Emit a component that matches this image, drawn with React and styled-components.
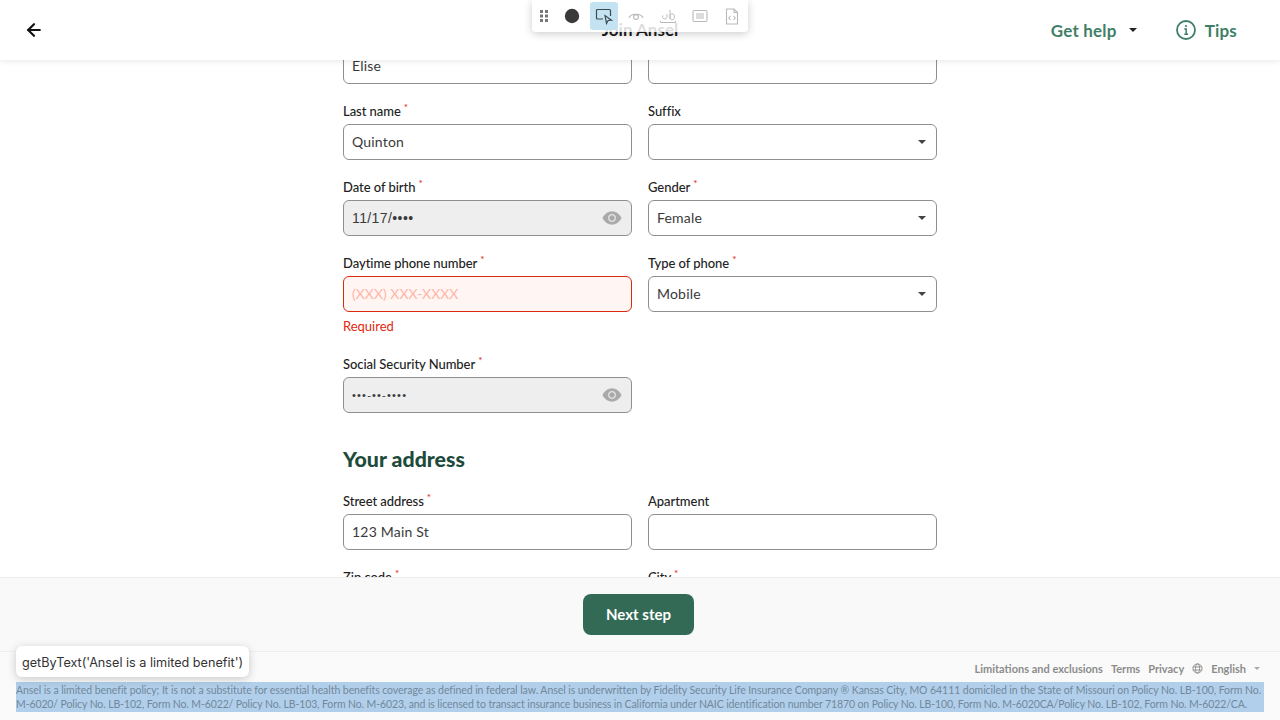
import styled, { createGlobalStyle } from "styled-components";
import { ArrowLeft } from "lucide-react";

const GlobalStyle = createGlobalStyle`
  html, body {
    margin: 0;
    height: 100%;
    overflow: hidden;
    background: #fff;
    font-family: "Lato", "Liberation Sans", sans-serif;
  }
  #root { height: 100%; }
`;

const Page = styled.div`
  position: relative;
  display: flex;
  flex-direction: column;
  width: 1280px;
  height: 720px;
  overflow: hidden;
`;

const Header = styled.header`
  position: relative;
  z-index: 2;
  display: flex;
  align-items: center;
  justify-content: space-between;
  flex: 0 0 60px;
  padding: 0 43px 0 24px;
  background: #fff;
  box-shadow: 0 1px 6px rgba(0, 0, 0, 0.1);
`;

const BackButton = styled.div`
  display: flex;
  color: #111;
`;

const Title = styled.div`
  position: absolute;
  left: 0;
  right: 0;
  top: 20px;
  text-align: center;
  font-size: 17px;
  line-height: 20px;
  font-weight: 700;
  color: #1c1c1c;
`;

const HeaderActions = styled.div`
  display: flex;
  align-items: center;
  gap: 39px;
`;

const HeaderLink = styled.div`
  display: flex;
  align-items: center;
  gap: ${(p) => p.$gap || 0}px;
  font-size: 17px;
  font-weight: 700;
  letter-spacing: 0.2px;
  color: #3f7f68;
`;

const Caret = styled.span`
  display: inline-block;
  width: 0;
  height: 0;
  margin-left: ${(p) => p.$left || 0}px;
  margin-right: ${(p) => p.$right || 0}px;
  border-left: ${(p) => p.$size || 4}px solid transparent;
  border-right: ${(p) => p.$size || 4}px solid transparent;
  border-top: ${(p) => p.$size || 4}px solid ${(p) => p.$color || "#333"};
`;

const Scroll = styled.main`
  flex: 1;
  min-height: 0;
  overflow: hidden;
`;

const Form = styled.div`
  width: 595px;
  margin: -34px 0 0 343px;
`;

const Grid = styled.div`
  display: grid;
  grid-template-columns: 289px 289px;
  column-gap: 16px;
  row-gap: 18px;
  align-items: start;
`;

const Field = styled.div`
  display: flex;
  flex-direction: column;
`;

const Label = styled.label`
  height: 20px;
  margin-bottom: 2px;
  font-size: 13px;
  line-height: 19px;
  font-weight: 500;
  color: #222;
  letter-spacing: -0.05px;

  sup {
    margin-left: 3px;
    font-size: 10px;
    line-height: 0;
    color: #e02810;
  }
`;

const InputBox = styled.div`
  box-sizing: border-box;
  display: flex;
  align-items: center;
  justify-content: space-between;
  height: 36px;
  padding: 0 9px 1px 8px;
  border: 1px solid ${(p) => (p.$error ? "#d92a0f" : "#8f8f8f")};
  border-radius: 6px;
  background: ${(p) => (p.$error ? "#fff5f3" : p.$disabled ? "#eeeeee" : "#fff")};
  font-size: 14px;
  color: ${(p) => (p.$error ? "#ffb5a8" : "#3a3a3a")};
  letter-spacing: ${(p) => (p.$error ? 0 : 0.2)}px;
`;

const Masked = styled.span`
  letter-spacing: ${(p) => p.$spacing || 0}px;
  font-family: "Liberation Sans", sans-serif;
  font-size: ${(p) => p.$size || 14}px;
`;

const ErrorText = styled.div`
  height: 20px;
  margin: 4px 0 1px;
  font-size: 13px;
  line-height: 20px;
  color: #e02810;
`;

const Heading = styled.h2`
  height: 28px;
  margin: 32px 0 19px;
  font-size: 21.3px;
  line-height: 28px;
  font-weight: 900;
  color: #1d4b3c;
`;

const ActionBar = styled.div`
  display: flex;
  align-items: flex-start;
  justify-content: center;
  box-sizing: border-box;
  flex: 0 0 74px;
  padding: 16px 3px 0 0;
  border-top: 1px solid #ececec;
  background: #f9f9f9;
`;

const NextButton = styled.button`
  width: 111px;
  height: 41px;
  padding: 0 0 2px;
  border: 0;
  border-radius: 8px;
  background: #326a56;
  color: #fff;
  font-family: inherit;
  font-size: 15px;
  font-weight: 700;
`;

const Footer = styled.footer`
  flex: 0 0 69px;
  box-sizing: border-box;
  padding: 8px 16px 0;
  border-top: 1px solid #eee;
  background: #fafafa;
`;

const FooterLinks = styled.div`
  display: flex;
  justify-content: flex-end;
  align-items: center;
  gap: 8px;
  height: 16px;
  padding-right: 4px;
  font-size: 11px;
  font-weight: 700;
  color: #8c8c8c;
`;

const Legal = styled.div`
  margin-top: 6px;
  padding: 1px 0;
  height: 28px;
  background: #b1cfea;
  font-size: 10.5px;
  line-height: 14px;
  color: #71889c;
  white-space: nowrap;
  overflow: hidden;
`;

const LegalLine = styled.div`
  letter-spacing: ${(p) => p.$spacing}px;
`;

const Toolbar = styled.div`
  position: absolute;
  z-index: 3;
  top: 0;
  left: 532px;
  display: flex;
  align-items: center;
  width: 216px;
  height: 32px;
  padding-left: 2px;
  box-sizing: border-box;
  border-radius: 0 0 4px 4px;
  background: rgba(255, 255, 255, 0.85);
  box-shadow: 0 2px 8px rgba(0, 0, 0, 0.2);
`;

const ToolSlot = styled.div`
  display: flex;
  align-items: center;
  justify-content: center;
  flex: 0 0 ${(p) => p.$width || 32}px;
  height: 28px;
  border-radius: 3px;
  background: ${(p) => (p.$active ? "#c3e3f2" : "transparent")};
  opacity: ${(p) => (p.$faded ? 0.45 : 1)};
`;

const Tooltip = styled.div`
  position: absolute;
  z-index: 3;
  left: 16px;
  top: 646px;
  display: flex;
  align-items: center;
  height: 31px;
  width: 233px;
  box-sizing: border-box;
  padding: 1px 0 0 6px;
  border-radius: 6px;
  background: #fff;
  box-shadow: 0 2px 10px rgba(0, 0, 0, 0.2);
  font-family: "Inter", sans-serif;
  font-size: 12.65px;
  color: #333;
  white-space: nowrap;
`;

const EyeIcon = () => (
  <svg width="20" height="20" viewBox="0 0 24 24" fill="#a9a9a9" stroke="#a9a9a9" strokeWidth="0.7">
    <path d="M12 4.5C7 4.5 2.73 7.61 1 12c1.73 4.39 6 7.5 11 7.5s9.27-3.11 11-7.5c-1.73-4.39-6-7.5-11-7.5zM12 17c-2.76 0-5-2.24-5-5s2.24-5 5-5 5 2.24 5 5-2.24 5-5 5zm0-8c-1.66 0-3 1.34-3 3s1.34 3 3 3 3-1.34 3-3-1.34-3-3-3z" />
  </svg>
);

const InfoIcon = () => (
  <svg width="20" height="20" viewBox="0 0 20 20" fill="none" stroke="#3f7f68" strokeWidth="1.8">
    <circle cx="10" cy="10" r="9" />
    <path d="M8.300 9h1.900v5M8.300 14.300h3.800" strokeWidth="1.500" />
    <circle cx="10" cy="6" r="1.100" fill="#3f7f68" stroke="none" />
  </svg>
);

const GlobeIcon = () => (
  <svg width="11" height="11" viewBox="0 0 12 12" fill="none" stroke="#8c8c8c" strokeWidth="1">
    <circle cx="6" cy="6" r="5" />
    <ellipse cx="6" cy="6" rx="2.2" ry="5" />
    <path d="M1 4.300h10M1 7.700h10" />
  </svg>
);

const LabeledField = ({ label, required, children }) => (
  <Field>
    <Label>
      {label}
      {required && <sup>*</sup>}
    </Label>
    {children}
  </Field>
);

const Select = ({ value }) => (
  <InputBox>
    <span>{value}</span>
    <Caret $right={1} $color="#444" />
  </InputBox>
);

export default function App() {
  return (
    <Page>
      <GlobalStyle />
      <Header>
        <BackButton>
          <ArrowLeft size={20} strokeWidth={2.6} />
        </BackButton>
        <Title>Join Ansel</Title>
        <HeaderActions>
          <HeaderLink>
            Get help
            <Caret $left={12} $color="#222" />
          </HeaderLink>
          <HeaderLink $gap={9}>
            <InfoIcon />
            Tips
          </HeaderLink>
        </HeaderActions>
      </Header>

      <Toolbar>
        <ToolSlot $width={20}>
          <svg width="8" height="12" viewBox="0 0 8 12" fill="#777">
            <rect x="0" y="0" width="3" height="3" />
            <rect x="5" y="0" width="3" height="3" />
            <rect x="0" y="4.500" width="3" height="3" />
            <rect x="5" y="4.500" width="3" height="3" />
            <rect x="0" y="9" width="3" height="3" />
            <rect x="5" y="9" width="3" height="3" />
          </svg>
        </ToolSlot>
        <ToolSlot $width={36}>
          <svg width="16" height="16" viewBox="0 0 16 16">
            <circle cx="8" cy="8" r="7.200" fill="#3a3a3a" />
          </svg>
        </ToolSlot>
        <ToolSlot $width={28} $active>
          <svg width="18" height="18" viewBox="0 0 18 18" fill="none" stroke="#3f4a50" strokeWidth="1.200">
            <path d="M8 12H2.500a1 1 0 0 1-1-1V3.500a1 1 0 0 1 1-1h12a1 1 0 0 1 1 1V9" />
            <path d="M10 8.500l1.500 8 1.600-3 3.400-.3z" fill="#c3e3f2" />
          </svg>
        </ToolSlot>
        <ToolSlot $faded $width={36}>
          <svg width="16" height="16" viewBox="0 0 16 16" fill="none" stroke="#666" strokeWidth="1.100">
            <path d="M1 10c2-5 12-5 14 0" />
            <circle cx="8" cy="9" r="2.400" />
          </svg>
        </ToolSlot>
        <ToolSlot $faded $width={28}>
          <svg width="18" height="18" viewBox="0 0 18 18" fill="none" stroke="#666" strokeWidth="1">
            <path d="M1.500 14v1.500h15V14" />
            <path d="M4 8.500a2.200 2.200 0 1 0 4 1.300V7M11 3v9M11 9.800a2.300 2.300 0 1 0 4.400 0 2.300 2.300 0 1 0-4.400 0" />
          </svg>
        </ToolSlot>
        <ToolSlot $faded $width={36}>
          <svg width="16" height="14" viewBox="0 0 16 14" fill="none" stroke="#666" strokeWidth="1.100">
            <rect x="1" y="1.500" width="14" height="11" rx="1.500" />
            <path d="M4 5h8M4 7h8M4 9h8" />
          </svg>
        </ToolSlot>
        <ToolSlot $faded $width={28}>
          <svg width="14" height="17" viewBox="0 0 14 17" fill="none" stroke="#666" strokeWidth="1.100">
            <path d="M1.500 1h7.500l3.500 3.500V16H1.500zM9 1v3.500h3.500" />
            <path d="M5.500 8L3.800 10l1.700 2M8.500 8l1.700 2-1.700 2" />
          </svg>
        </ToolSlot>
      </Toolbar>

      <Scroll>
        <Form>
          <Grid>
            <LabeledField label="First name" required>
              <InputBox>Elise</InputBox>
            </LabeledField>
            <LabeledField label="Middle name">
              <InputBox />
            </LabeledField>
            <LabeledField label="Last name" required>
              <InputBox>Quinton</InputBox>
            </LabeledField>
            <LabeledField label="Suffix">
              <Select />
            </LabeledField>
            <LabeledField label="Date of birth" required>
              <InputBox $disabled>
                <Masked $spacing={0.4}>11/17/••••</Masked>
                <EyeIcon />
              </InputBox>
            </LabeledField>
            <LabeledField label="Gender" required>
              <Select value="Female" />
            </LabeledField>
            <LabeledField label="Daytime phone number" required>
              <InputBox $error>(XXX) XXX-XXXX</InputBox>
              <ErrorText>Required</ErrorText>
            </LabeledField>
            <LabeledField label="Type of phone" required>
              <Select value="Mobile" />
            </LabeledField>
            <LabeledField label="Social Security Number" required>
              <InputBox $disabled>
                <Masked $size={11} $spacing={1.2}>•••-••-••••</Masked>
                <EyeIcon />
              </InputBox>
            </LabeledField>
          </Grid>
          <Heading>Your address</Heading>
          <Grid>
            <LabeledField label="Street address" required>
              <InputBox>123 Main St</InputBox>
            </LabeledField>
            <LabeledField label="Apartment">
              <InputBox />
            </LabeledField>
            <LabeledField label="Zip code" required>
              <InputBox />
            </LabeledField>
            <LabeledField label="City" required>
              <InputBox />
            </LabeledField>
          </Grid>
        </Form>
      </Scroll>

      <ActionBar>
        <NextButton>Next step</NextButton>
      </ActionBar>

      <Footer>
        <FooterLinks>
          <span>Limitations and exclusions</span>
          <span>Terms</span>
          <span>Privacy</span>
          <GlobeIcon />
          <span>English</span>
          <Caret $size={3} $color="#aaa" />
        </FooterLinks>
        <Legal>
          <LegalLine $spacing={-0.06}>
            Ansel is a limited benefit policy; It is not a substitute for essential health benefits coverage as defined in federal law. Ansel is underwritten by Fidelity Security Life Insurance Company ® Kansas City, MO 64111 domiciled in the State of Missouri on Policy No. LB-100, Form No.
          </LegalLine>
          <LegalLine $spacing={-0.11}>
            M-6020/ Policy No. LB-102, Form No. M-6022/ Policy No. LB-103, Form No. M-6023, and is licensed to transact insurance business in California under NAIC identification number 71870 on Policy No. LB-100, Form No. M-6020CA/Policy No. LB-102, Form No. M-6022/CA.
          </LegalLine>
        </Legal>
      </Footer>

      <Tooltip>getByText('Ansel is a limited benefit')</Tooltip>
    </Page>
  );
}
